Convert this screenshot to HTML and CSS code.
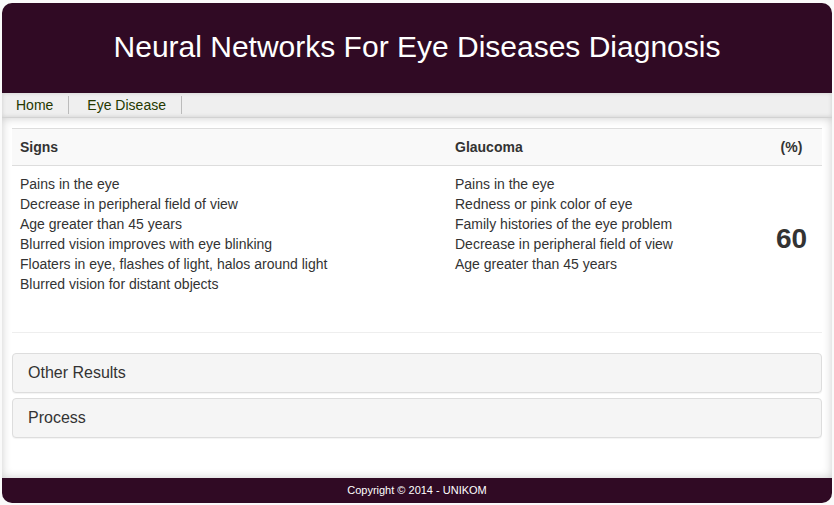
FILE: index.html
```html
<!DOCTYPE html>
<html lang="en">
<head>
<meta charset="utf-8">
<title>Neural Networks For Eye Diseases Diagnosis</title>
<link rel="stylesheet" href="styles.css">
</head>
<body>
<div class="page">
  <header class="header">
    <h1>Neural Networks For Eye Diseases Diagnosis</h1>
  </header>
  <nav class="nav">
    <a href="#">Home</a>
    <a href="#">Eye Disease</a>
  </nav>
  <main class="content">
    <table class="results">
      <thead>
        <tr><th class="signs">Signs</th><th>Glaucoma</th><th class="percent">(%)</th></tr>
      </thead>
      <tbody>
        <tr>
          <td>
            <ul>
              <li>Pains in the eye</li>
              <li>Decrease in peripheral field of view</li>
              <li>Age greater than 45 years</li>
              <li>Blurred vision improves with eye blinking</li>
              <li>Floaters in eye, flashes of light, halos around light</li>
              <li>Blurred vision for distant objects</li>
            </ul>
          </td>
          <td>
            <ul>
              <li>Pains in the eye</li>
              <li>Redness or pink color of eye</li>
              <li>Family histories of the eye problem</li>
              <li>Decrease in peripheral field of view</li>
              <li>Age greater than 45 years</li>
            </ul>
          </td>
          <td class="percent score">60</td>
        </tr>
      </tbody>
    </table>
    <hr>
    <div class="panels">
      <button class="panel" type="button">Other Results</button>
      <button class="panel" type="button">Process</button>
    </div>
  </main>
  <footer class="footer">Copyright © 2014 - UNIKOM</footer>
</div>
</body>
</html>
```

FILE: styles.css
```css
* {
  box-sizing: border-box;
}

body {
  margin: 0;
  padding: 3px 2px 2px;
  background: #fafafa;
  color: #333;
  font: 14px/20px "Liberation Sans", Arial, sans-serif;
}

.page {
  display: flex;
  flex-direction: column;
  min-height: calc(100vh - 5px);
  border-radius: 10px;
  overflow: hidden;
}

.header {
  padding: 27px 0 30px;
  background: #300a24;
  color: #fff;
  text-align: center;
}

.header h1 {
  margin: 0;
  font-size: 30px;
  font-weight: 400;
  line-height: 33px;
}

.nav {
  display: flex;
  padding: 3px 0;
  background: #efefef;
  border-bottom: 1px solid #d2d2d2;
  box-shadow: inset 0 0 4px #ccc;
}

.nav a {
  padding: 0 15px 0 14px;
  border-right: 1px solid #bbb;
  color: #253800;
  line-height: 18px;
  text-decoration: none;
}

.nav a + a {
  padding-left: 18px;
}

.content {
  flex: 1;
  padding: 10px 10px 40px;
  background: #fff;
  box-shadow: inset 0 0 10px #ccc;
}

.results {
  width: 100%;
  border-collapse: collapse;
}

.results th {
  padding: 8px;
  background: #f9f9f9;
  border-top: 1px solid #ddd;
  border-bottom: 1px solid #ddd;
  text-align: left;
}

.results td {
  padding: 8px;
  vertical-align: top;
}

.results ul {
  margin: 0 0 10px;
  padding: 0;
  list-style: none;
}

.results .signs {
  width: 435px;
}

.results .percent {
  width: 61px;
  text-align: center;
  white-space: nowrap;
}

.results .score {
  font-size: 28px;
  font-weight: 700;
  vertical-align: middle;
}

hr {
  margin: 20px 0;
  border: 0;
  border-top: 1px solid #eee;
}

.panels {
  display: grid;
  gap: 5px;
}

.panel {
  padding: 10px 15px;
  background: #f5f5f5;
  border: 1px solid #ddd;
  border-radius: 4px;
  box-shadow: 0 1px 1px rgba(0, 0, 0, 0.05);
  color: #333;
  font: 16px/18px "Liberation Sans", Arial, sans-serif;
  text-align: left;
}

.footer {
  padding: 3px 0 4px;
  background: #300a24;
  color: #fff;
  font-size: 11px;
  line-height: 18px;
  text-align: center;
}
```
